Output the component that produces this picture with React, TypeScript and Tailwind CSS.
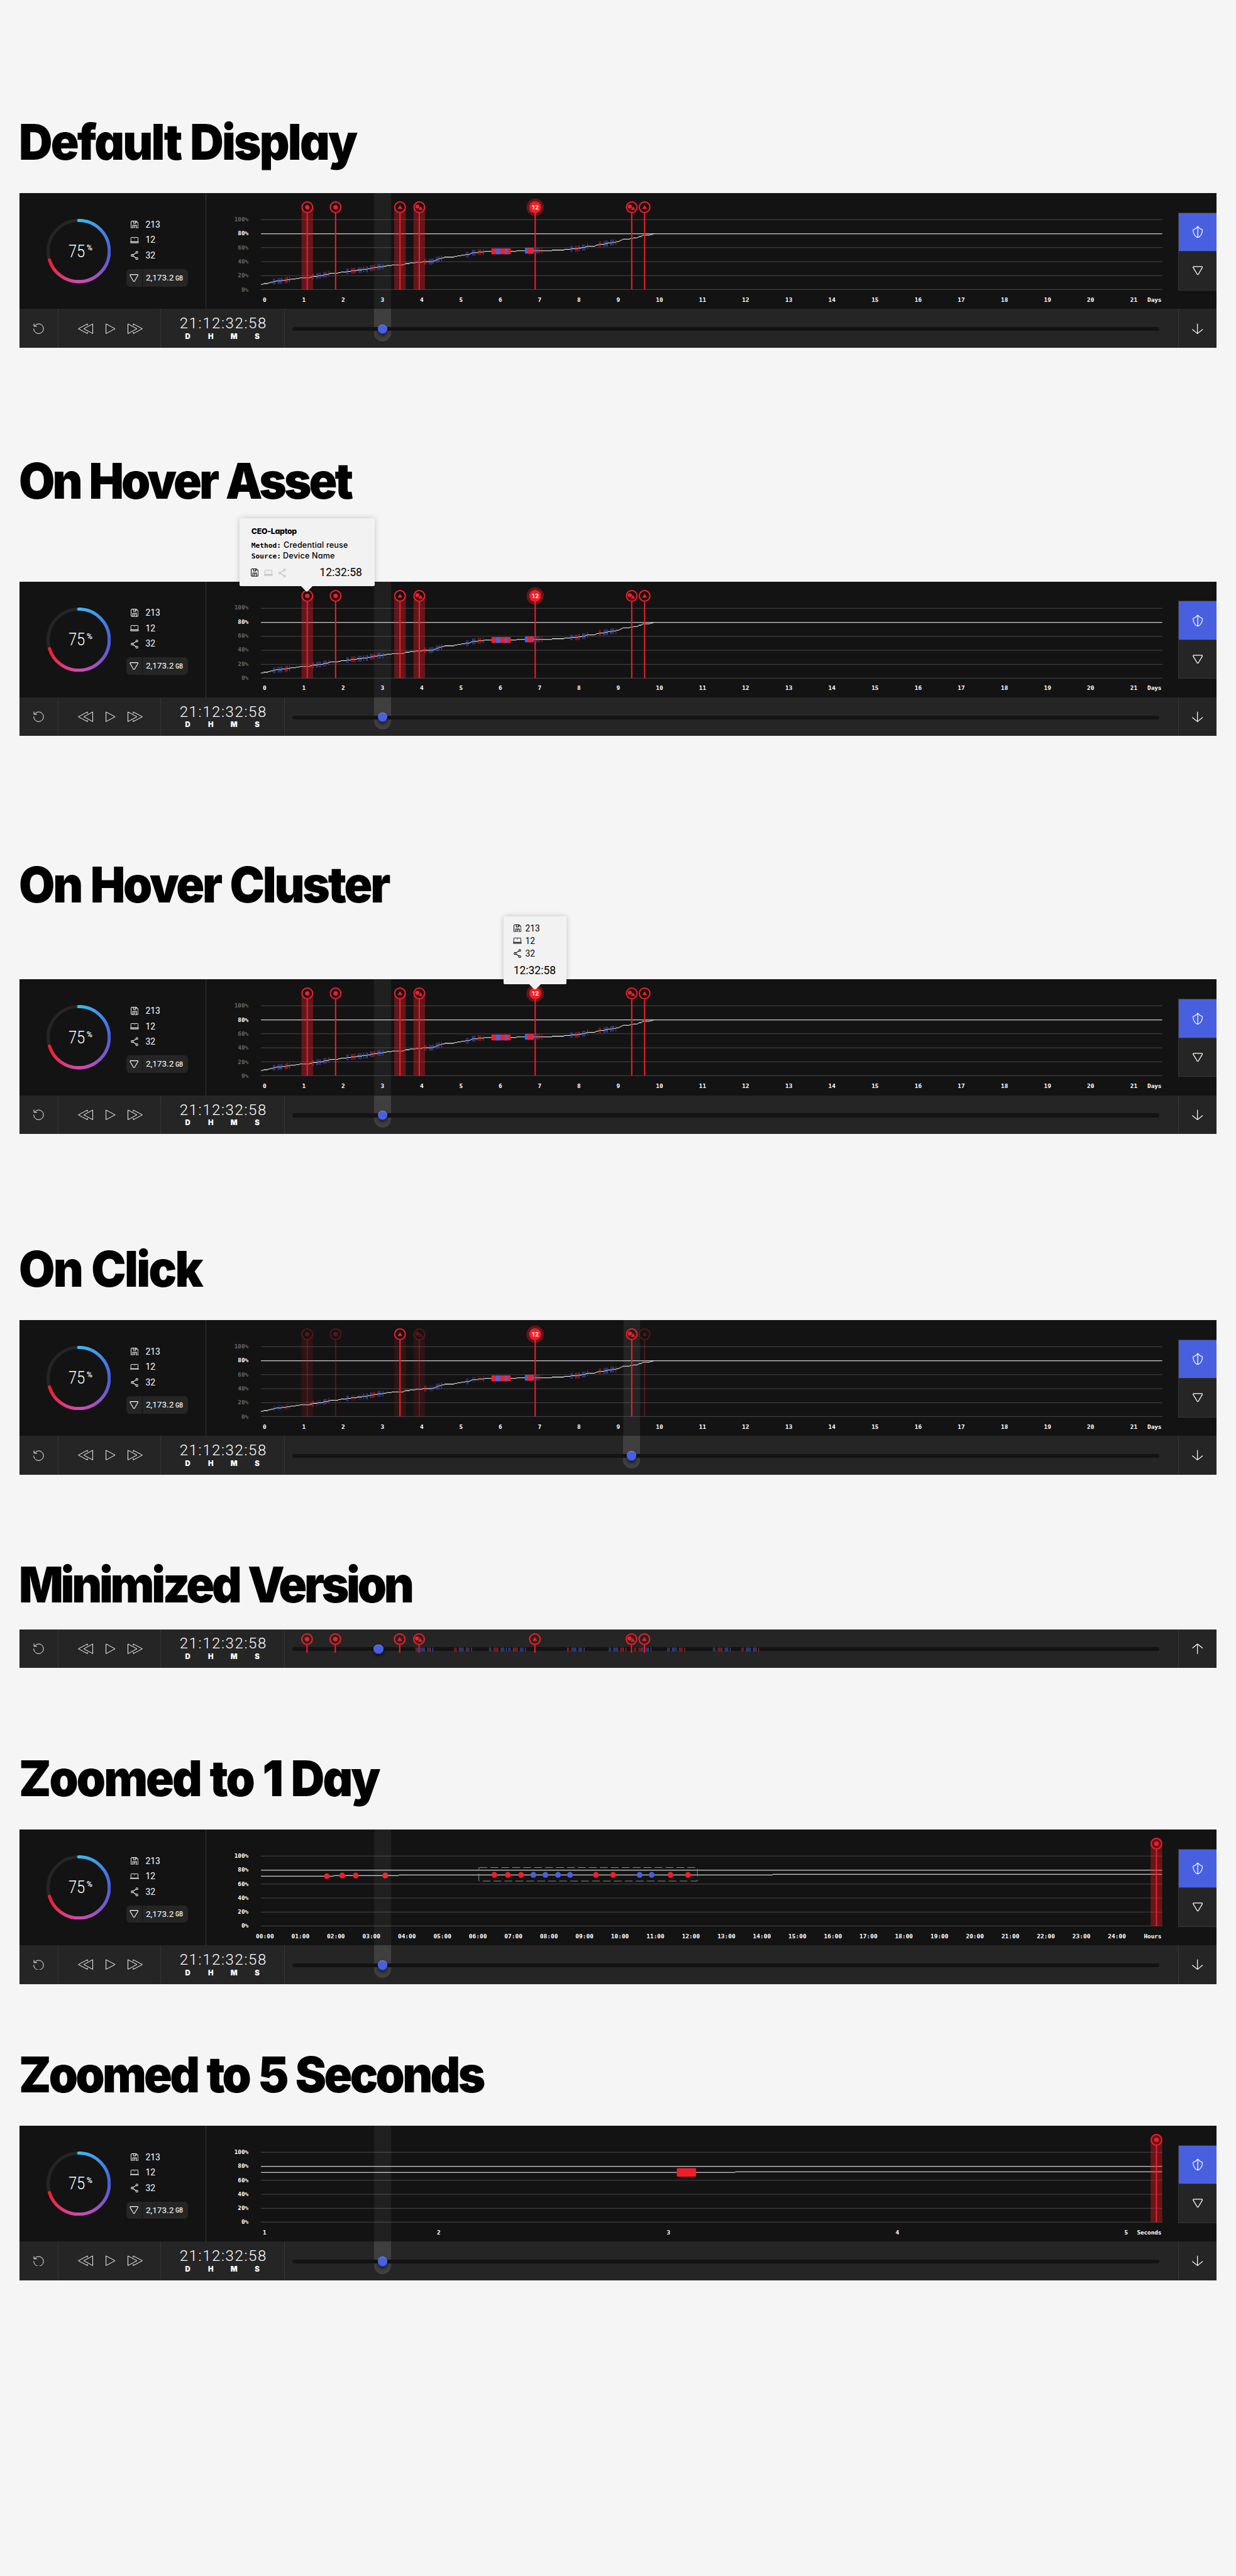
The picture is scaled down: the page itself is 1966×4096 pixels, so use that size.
import React from "react";

/* The root sets --spacing to one design unit (0.512px), so w-120 is 120 design units. */

const RED = "#f31d28";
const BLUE = "#4860e0";

type Glyph = "dot" | "triangle" | "both";
type MarkerData = { x: number; glyph: Glyph; band?: boolean; dim?: boolean };
type AxisLabel = { text: string; cls: string };

/* ---------- icons ---------- */

type IconProps = { className?: string };

const Floppy = ({ className = "" }: IconProps) => (
  <svg viewBox="0 0 24 25" className={`h-25 w-24 ${className}`} fill="none" stroke="currentColor" strokeWidth="2">
    <path d="M4 1h13l6 6v13.5a3.5 3.5 0 0 1-3.500 3.500H4.500A3.500 3.500 0 0 1 1 20.500V4a3 3 0 0 1 3-3z" />
    <path d="M8 1v6a1 1 0 0 0 1 1h6a1 1 0 0 0 1-1V1M13.500 3.500v2.500M6 24V14.500a1 1 0 0 1 1-1h10a1 1 0 0 1 1 1V24M9 17h6M9 20.300h4" />
  </svg>
);

const Laptop = ({ className = "" }: IconProps) => (
  <svg viewBox="0 0 27 19" className={`h-19 w-27 ${className}`} fill="none" stroke="currentColor" strokeWidth="1.700">
    <rect x="2.500" y="1" width="22" height="13.500" rx="1" />
    <rect x="1" y="14.300" width="25" height="3.700" rx="1" fill="currentColor" fillOpacity="0.250" />
    <circle cx="13.500" cy="4.200" r="1.200" fill="currentColor" stroke="none" />
  </svg>
);

const Share = ({ className = "" }: IconProps) => (
  <svg viewBox="0 0 24 28" className={`h-28 w-24 ${className}`} fill="none" stroke="currentColor" strokeWidth="2">
    <circle cx="4.300" cy="14" r="3" />
    <circle cx="19" cy="4.300" r="3" />
    <circle cx="19" cy="23.700" r="3" />
    <path d="M6.800 12.300 16.500 6M6.800 15.700 16.500 22" />
  </svg>
);

const Prism = ({ className = "" }: IconProps) => (
  <svg viewBox="0 0 32 28" className={className} fill="none" stroke="currentColor" strokeWidth="2.500" strokeLinejoin="round">
    <path d="M3.500 1.500h25a2 2 0 0 1 1.700 3L17.800 25.500a2 2 0 0 1-3.600 0L1.800 4.500a2 2 0 0 1 1.700-3z" />
  </svg>
);

const Shield = () => (
  <svg viewBox="0 0 32 38" className="h-38 w-32" fill="none" stroke="currentColor" strokeWidth="2.400" strokeLinejoin="round">
    <path d="M16 2c-3.500 4.500-8.500 8.500-14.500 10.300C1.500 25 8 34.500 16 36.500c8-2 14.500-11.500 14.500-24.200C24.500 10.500 19.500 6.500 16 2zM16 2v34.500" />
  </svg>
);

const Arrow = ({ up }: { up?: boolean }) => (
  <svg viewBox="0 0 34 34" className={up ? "h-34 w-34 rotate-180" : "h-34 w-34"} fill="none" stroke="currentColor" strokeWidth="2.400" strokeLinecap="round" strokeLinejoin="round">
    <path d="M17 2v30M1.500 19.500 17 32l15.500-12.500" />
  </svg>
);

const Reload = () => (
  <svg viewBox="0 0 33 33" className="h-33 w-33" fill="none" stroke="currentColor" strokeWidth="1.900">
    <path d="M1.500 16.500A15 15 0 1 0 4.500 8M2 1v8.300h9.500" />
  </svg>
);

const Rewind = ({ flip }: { flip?: boolean }) => (
  <svg viewBox="0 0 47 34" className={flip ? "h-34 w-47 -scale-x-100" : "h-34 w-47"} fill="none" stroke="currentColor" strokeWidth="1.900" strokeLinejoin="round">
    <path d="M46 2v30L18 17zM29.500 7V2L1.200 17l28.300 15v-5" />
  </svg>
);

const Play = () => (
  <svg viewBox="0 0 31 34" className="h-34 w-31" fill="none" stroke="currentColor" strokeWidth="1.900" strokeLinejoin="round">
    <path d="M1.200 2v30L29.500 17z" />
  </svg>
);

/* ---------- chart data ---------- */

const LINE_ENDS = [
  818, 832, 840, 848, 856, 874, 890, 902, 918, 930, 962, 970, 986, 1002, 1006, 1018, 1024, 1050, 1058, 1076, 1090, 1108,
  1124, 1142, 1150, 1160, 1172, 1190, 1200, 1216, 1252, 1258, 1272, 1290, 1312, 1344, 1350, 1354, 1360, 1364, 1372,
  1380, 1410, 1420, 1432, 1444, 1458, 1462, 1466, 1484, 1504, 1604, 1714, 1752, 1772, 1796, 1806, 1818, 1822, 1848,
  1852, 1860, 1878, 1888, 1900, 1914, 1922, 1926, 1930, 1934, 1956, 1966, 1980, 1984, 1992, 1996, 2018, 2026, 2030,
];

const LINE_PATH = LINE_ENDS.map((end, i) => `M${i ? LINE_ENDS[i - 1] : 810} ${283 - i * 2}H${end}`).join("");

const lineY = (x: number) => 283 - 2 * LINE_ENDS.findIndex((end) => x <= end + 0.5);

const TICKS_BLUE = [
  849, 853, 863, 867, 871, 875, 893, 899, 983, 987, 995, 1005, 1009, 1021, 1077, 1081, 1113, 1117, 1121, 1129, 1137,
  1141, 1151, 1173, 1177, 1181, 1189, 1333, 1337, 1341, 1345, 1355, 1359, 1363, 1371, 1449, 1453, 1467, 1471, 1475,
  1667, 1773, 1777, 1799, 1809, 1813, 1817, 1825, 1875, 1879, 1883, 1887, 1897, 1901, 1905,
];
const TICKS_RED = [
  885, 889, 969, 973, 991, 1013, 1091, 1095, 1099, 1103, 1155, 1159, 1163, 1319, 1323, 1485, 1489, 1493, 1501, 1671,
  1675, 1683, 1787, 1791, 1795, 1861, 1865, 1913,
];
const DIM_RANGES = [[0, 900], [980, 996], [1090, 1122], [1332, 1346], [1466, 1494], [1682, 1684]];
const isDim = (x: number) => DIM_RANGES.some(([a, b]) => x >= a && x <= b);

const MINI_BLUE = [
  1293, 1297, 1307, 1311, 1315, 1319, 1337, 1345, 1427, 1431, 1439, 1449, 1453, 1465, 1521, 1525, 1557, 1561, 1565,
  1573, 1581, 1585, 1595, 1617, 1621, 1625, 1633, 1777, 1781, 1785, 1789, 1799, 1803, 1807, 1815, 1893, 1897, 1907,
  1911, 1915, 1919, 1993, 1997, 2007, 2011, 2015, 2023, 2075, 2079, 2089, 2093, 2097, 2101, 2111, 2217, 2221, 2243,
  2253, 2257, 2261, 2269, 2319, 2323, 2327, 2331, 2341, 2345, 2349,
];
const MINI_RED = [
  1329, 1333, 1413, 1417, 1435, 1457, 1535, 1539, 1543, 1547, 1599, 1603, 1607, 1763, 1767, 1929, 1933, 1937, 1945,
  1971, 1975, 1985, 1989, 2115, 2119, 2127, 2231, 2235, 2239, 2305, 2309, 2357,
];

const GRID = [82.5, 126.5, 169.5, 213, 256.5, 299.5];

const MARKERS: MarkerData[] = [
  { x: 954, glyph: "dot", band: true },
  { x: 1042, glyph: "dot" },
  { x: 1242, glyph: "triangle", band: true },
  { x: 1302, glyph: "both", band: true },
  { x: 1962, glyph: "both" },
  { x: 2002, glyph: "triangle" },
];
const CLICK_MARKERS: MarkerData[] = MARKERS.map((m) => ({ ...m, dim: m.x !== 1242 && m.x !== 1962 }));
const MINI_MARKERS: MarkerData[] = [
  ...MARKERS.map((m) => ({ ...m, band: false })),
  { x: 1662, glyph: "triangle" as Glyph },
];

const DAY_AXIS: AxisLabel[] = Array.from({ length: 22 }, (_, i) => ({
  text: String(i),
  cls: i === 0 ? "w-[5.17px]" : i < 10 ? "w-[5.17px] ml-112" : "w-[11.26px] ml-112",
}));
const HOUR_AXIS: AxisLabel[] = Array.from({ length: 25 }, (_, i) => ({
  text: `${String(i).padStart(2, "0")}:00`,
  cls: i === 0 ? "w-56 -ml-22" : "w-56 ml-[27.8px]",
}));
const SECOND_AXIS: AxisLabel[] = [
  { text: "1", cls: "w-10" },
  { text: "2", cls: "w-10 ml-531" },
  { text: "3", cls: "w-10 ml-704" },
  { text: "4", cls: "w-10 ml-701" },
  { text: "5", cls: "w-10 ml-701" },
];

/* ---------- markers ---------- */

function Marker({ m, cy, bottom, fill }: { m: MarkerData; cy: number; bottom: number; fill: string }) {
  return (
    <g>
      <circle cx={m.x} cy={cy} r="16.5" fill={fill} />
      <g opacity={m.dim ? 0.3 : 1}>
        <circle cx={m.x} cy={cy} r="16.5" fill="none" stroke={RED} strokeWidth="4" />
        <path d={`M${m.x} ${cy + 18}V${bottom}`} stroke={RED} strokeWidth="4" />
        {m.glyph === "dot" && <circle cx={m.x} cy={cy} r="7" fill={RED} />}
        {m.glyph === "triangle" && <path d={`M${m.x} ${cy - 7}l7.5 12.500h-15z`} fill={RED} />}
        {m.glyph === "both" && (
          <>
            <circle cx={m.x - 6} cy={cy - 2} r="6.500" fill={RED} />
            <path d={`M${m.x + 4} ${cy - 4}l7.500 12.500h-15z`} fill={RED} stroke={fill === "none" ? "#131313" : fill} strokeWidth="0.700" />
          </>
        )}
      </g>
    </g>
  );
}

function Band({ x, opacity }: { x: number; opacity: number }) {
  return <rect x={x - 18} y="44" width="36" height="255.500" fill={RED} opacity={opacity} />;
}

function Gridlines() {
  return (
    <>
      {GRID.map((y, i) => (
        <path key={y} d={`M810 ${y}H3610`} stroke={i === 1 ? "#fff" : "#6c6c6c"} strokeWidth={i === 1 ? 2.2 : 1.2} />
      ))}
    </>
  );
}

function ChartFrame({ children }: { children: React.ReactNode }) {
  return (
    <svg viewBox="640 0 3020 360" className="absolute inset-0 h-360 w-3020" preserveAspectRatio="none">
      {children}
    </svg>
  );
}

function DaysChart({ cursor, clicked }: { cursor: number; clicked?: boolean }) {
  const markers = clicked ? CLICK_MARKERS : MARKERS;
  const tick = (x: number, color: string) => (
    <rect key={x} x={x - 0.8} y={lineY(x) - 9} width="1.600" height="18" fill={color} opacity={clicked && isDim(x) ? 0.45 : 1} />
  );
  return (
    <ChartFrame>
      <rect x={cursor - 26} y="0" width="52" height="360" fill="#fff" opacity={clicked ? 0.075 : 0.06} />
      <Gridlines />
      <path d={LINE_PATH} stroke="#fff" strokeWidth="2" />
      {TICKS_BLUE.map((x) => tick(x, BLUE))}
      {TICKS_RED.map((x) => tick(x, RED))}
      <rect x="1526" y="172" width="60" height="18" rx="2" fill={RED} />
      <rect x="1540" y="172" width="14" height="18" fill={BLUE} />
      <rect x="1568" y="172" width="7" height="18" fill={BLUE} />
      <rect x="1630" y="170" width="28" height="18" rx="2" fill={BLUE} />
      <rect x="1638" y="170" width="16" height="18" fill={RED} />
      {markers.filter((m) => m.band).map((m) => (
        <Band key={m.x} x={m.x} opacity={clicked ? 0.12 : 0.36} />
      ))}
      {markers.map((m) => (
        <Marker key={m.x} m={m} cy={44} bottom={299.5} fill={m.x === cursor ? "#212121" : "#131313"} />
      ))}
      <circle cx="1662" cy="44" r="27" fill={RED} opacity="0.360" />
      <circle cx="1662" cy="44" r="18.500" fill={RED} />
      <path d="M1662 60V299.500" stroke={RED} strokeWidth="4" />
      <text x="1662" y="51" textAnchor="middle" fill="#fff" fontFamily="Roboto, sans-serif" fontWeight="700" fontSize="19.500">
        12
      </text>
    </ChartFrame>
  );
}

function HoursChart() {
  const dots: [number, number, string][] = [
    [1014.6, 145, RED], [1062.4, 143, RED], [1104.5, 143, RED], [1196.3, 143, RED],
    [1535, 141, RED], [1577, 141, RED], [1618, 141, RED],
    [1656.5, 141, BLUE], [1694, 141, BLUE], [1733, 141, BLUE], [1770.3, 141, BLUE],
    [1850.7, 141, RED], [1904.2, 141, RED], [1986.5, 141, BLUE], [2023.8, 141, BLUE],
    [2082.2, 141, RED], [2136.7, 141, RED],
  ];
  return (
    <ChartFrame>
      <Gridlines />
      <path d="M810 145H1036M1036 143H1239M1239 141H2400M2400 139H3610" stroke="#fff" strokeWidth="2" />
      <rect x="1487" y="118" width="679" height="42" fill="none" stroke="#8a8a8a" strokeWidth="2" strokeDasharray="24 10" rx="2" />
      {dots.map(([x, y, c]) => (
        <circle key={x} cx={x} cy={y} r="9" fill={c} />
      ))}
      <rect x="1162" y="0" width="52" height="360" fill="#fff" opacity="0.060" />
      <Band x={3592} opacity={0.36} />
      <circle cx="3592" cy="44" r="16.500" fill="#611519" />
      <Marker m={{ x: 3592, glyph: "dot" }} cy={44} bottom={299.5} fill="none" />
    </ChartFrame>
  );
}

function SecondsChart() {
  return (
    <ChartFrame>
      <Gridlines />
      <path d="M810 145H2284M2284 143H3610" stroke="#fff" strokeWidth="2" />
      <rect x="2102" y="132" width="60" height="26" rx="3" fill={RED} />
      <rect x="1162" y="0" width="52" height="360" fill="#fff" opacity="0.060" />
      <Band x={3592} opacity={0.36} />
      <circle cx="3592" cy="44" r="16.500" fill="#611519" />
      <Marker m={{ x: 3592, glyph: "dot" }} cy={44} bottom={299.5} fill="none" />
    </ChartFrame>
  );
}

/* ---------- panel parts ---------- */

function Gauge() {
  return (
    <div className="relative h-200 w-200 shrink-0">
      <svg viewBox="0 0 200 200" className="absolute inset-0 h-200 w-200" fill="none" strokeWidth="10" strokeLinecap="round">
        <defs>
          <linearGradient id="arcA" gradientUnits="userSpaceOnUse" x1="100" y1="5" x2="195" y2="100">
            <stop offset="0" stopColor="#3eb8f2" />
            <stop offset="1" stopColor="#4760e0" />
          </linearGradient>
          <linearGradient id="arcB" gradientUnits="userSpaceOnUse" x1="195" y1="100" x2="100" y2="195">
            <stop offset="0" stopColor="#4760e0" />
            <stop offset="1" stopColor="#d04bb0" />
          </linearGradient>
          <linearGradient id="arcC" gradientUnits="userSpaceOnUse" x1="100" y1="195" x2="9" y2="128">
            <stop offset="0" stopColor="#d04bb0" />
            <stop offset="1" stopColor="#f31d28" />
          </linearGradient>
        </defs>
        <circle cx="100" cy="100" r="95" stroke="#252525" />
        <path d="M100 195A95 95 0 0 1 9.150 127.800" stroke="url(#arcC)" />
        <path d="M195 100A95 95 0 0 1 100 195" stroke="url(#arcB)" />
        <path d="M100 5A95 95 0 0 1 195 100" stroke="url(#arcA)" />
      </svg>
      <div className="relative flex h-200 items-center pl-68">
        <span className="w-52 origin-left scale-x-[0.86] font-[Roboto] text-[27.5px] leading-none font-light">75</span>
        <span className="mb-18 ml-5 origin-left font-[Roboto] text-[12.6px] leading-none font-medium">%</span>
      </div>
    </div>
  );
}

function Stat({ icon, value }: { icon: React.ReactNode; value: string }) {
  return (
    <div className="flex h-48 items-center gap-20 pl-12">
      <div className="flex w-28 justify-center pb-3">{icon}</div>
      <span className="font-[Roboto] text-[13.9px] leading-none">{value}</span>
    </div>
  );
}

function Summary() {
  return (
    <div className="flex w-578 shrink-0 gap-48 pt-80 pl-84">
      <Gauge />
      <div className="-mt-5 flex w-192 flex-col">
        <Stat icon={<Floppy />} value="213" />
        <Stat icon={<Laptop />} value="12" />
        <Stat icon={<Share />} value="32" />
        <div className="mt-17 flex h-54 overflow-hidden rounded-[6px] bg-[#252525]">
          <div className="flex w-51 items-center justify-center border-r border-[#131313]">
            <Prism className="h-24 w-28" />
          </div>
          <div className="flex items-center gap-5 pl-10 font-[Roboto] leading-none whitespace-nowrap">
            <span className="text-[13.6px]">2,173.2</span>
            <span className="w-24 origin-left scale-x-[0.88] pt-4 text-[10.4px] font-medium">GB</span>
          </div>
        </div>
      </div>
    </div>
  );
}

function YAxis({ bright }: { bright?: boolean }) {
  return (
    <div className="flex h-238 flex-col items-end justify-between">
      {["100%", "80%", "60%", "40%", "20%", "0%"].map((t) => (
        <span
          key={t}
          className={
            bright || t === "80%"
              ? "h-20 font-['DejaVu_Sans_Mono'] text-[9.4px] leading-20 font-bold text-white"
              : "h-20 font-['DejaVu_Sans_Mono'] text-[9.4px] leading-20 font-bold text-[#666]"
          }
        >
          {t}
        </span>
      ))}
    </div>
  );
}

function XAxis({ labels, unit }: { labels: AxisLabel[]; unit: string }) {
  return (
    <div className="relative flex justify-between pt-12 pr-50 pl-177 font-['DejaVu_Sans_Mono'] text-[9.5px] leading-20 font-bold">
      <div className="flex">
        {labels.map((l) => (
          <span key={l.text} className={`flex shrink-0 justify-center whitespace-nowrap ${l.cls}`}>
            {l.text}
          </span>
        ))}
      </div>
      <span className="absolute top-12 right-52 tracking-[-0.02em]">{unit}</span>
    </div>
  );
}

function SideTabs() {
  return (
    <div className="mt-60 flex h-242 w-120 shrink-0 flex-col border-y border-l border-[#363636]">
      <div className="flex flex-1 items-center justify-center border-b border-[#363636] bg-[#4860e0]">
        <Shield />
      </div>
      <div className="flex flex-1 items-center justify-center bg-[#252525]">
        <Prism className="h-28 w-32" />
      </div>
    </div>
  );
}

function Knob() {
  return (
    <div className="absolute top-47 h-30 w-30 rounded-full bg-[#4860e0] shadow-[0_3px_5px_rgba(0,0,0,0.6),inset_0_1px_0.500px_#7388f2,inset_0_-1px_0.500px_#1733c6]" />
  );
}

function ControlBar({ cursor, mini }: { cursor: string; mini?: boolean }) {
  return (
    <div className="flex h-120 bg-[#252525] text-white">
      <div className="flex w-121 shrink-0 items-center justify-center border-r border-[#363636]">
        <Reload />
      </div>
      <div className="flex w-320 shrink-0 items-center gap-38 border-r border-[#363636] pl-62">
        <Rewind />
        <Play />
        <Rewind flip />
      </div>
      <div className="flex w-384 shrink-0 flex-col items-center border-r border-[#363636] pt-23">
        <span className="pl-4 font-[Roboto] text-[24px] leading-46 font-light tracking-[1.6px]">21:12:32:58</span>
        <div className="mt-6 flex gap-52 pr-2 font-[Inter] text-[11.4px] leading-22 font-black">
          {["D", "H", "M", "S"].map((c) => (
            <span key={c} className="flex w-20 justify-center">
              {c}
            </span>
          ))}
        </div>
      </div>
      <div className="relative flex flex-1 items-center pl-23">
        {!mini && <div className={`absolute top-0 h-100 w-52 rounded-b-full bg-white/12 ${cursor}`} />}
        <div className="relative mt-4 h-12 w-2694 rounded-full bg-[#131313]" />
        {mini && (
          <svg viewBox="885 0 2775 120" className="absolute inset-0 h-120 w-2775" preserveAspectRatio="none">
            {MINI_BLUE.map((x) => (
              <rect key={x} x={x - 0.9} y="56" width="1.800" height="12" fill={BLUE} />
            ))}
            {MINI_RED.map((x) => (
              <rect key={x} x={x - 0.9} y="56" width="1.800" height="12" fill={RED} />
            ))}
            {MINI_MARKERS.map((m) => (
              <Marker key={m.x} m={m} cy={30} bottom={72} fill="#252525" />
            ))}
          </svg>
        )}
        <div className={`absolute top-0 flex w-52 justify-center ${cursor}`}>
          <Knob />
        </div>
      </div>
      <div className="flex w-120 shrink-0 items-center justify-center border-l border-[#363636]">
        <Arrow up={mini} />
      </div>
    </div>
  );
}

type PanelProps = {
  chart: React.ReactNode;
  labels: AxisLabel[];
  unit: string;
  cursor?: string;
  bright?: boolean;
  children?: React.ReactNode;
};

function Panel({ chart, labels, unit, cursor = "left-277", bright, children }: PanelProps) {
  return (
    <div className="relative mx-60 h-480 text-white">
      <div className="flex h-360 bg-[#131313]">
        <Summary />
        <div className="relative flex-1 border-l border-[#363636]">
          {chart}
          <div className="relative w-132 pt-72">
            <YAxis bright={bright} />
          </div>
          <XAxis labels={labels} unit={unit} />
        </div>
        <SideTabs />
      </div>
      <ControlBar cursor={cursor} />
      {children}
    </div>
  );
}

function Pointer() {
  return (
    <svg viewBox="0 0 36 17" className="absolute top-full left-1/2 h-17 w-36 -translate-x-1/2">
      <path d="M0 0H36L20.500 15.500a3.500 3.500 0 0 1-5 0z" fill="#f2f2f2" />
    </svg>
  );
}

function AssetTooltip() {
  return (
    <div className="absolute -top-196 left-684 flex h-210 w-420 flex-col rounded-[2px] bg-[#f2f2f2] pt-27 pl-37 leading-none text-black shadow-[0_0_10px_rgba(0,0,0,0.2)]">
      <span className="font-[Inter] text-[12.4px] leading-28 font-extrabold tracking-[-0.025em] [font-feature-settings:'cv11']">CEO-Laptop</span>
      <div className="mt-12 flex h-34 items-center">
        <span className="w-100 font-['DejaVu_Sans_Mono'] text-[11.2px] font-bold">Method:</span>
        <span className="font-[Inter] text-[12.6px] font-medium tracking-[0.015em] [font-feature-settings:'cv11']">Credential reuse</span>
      </div>
      <div className="flex h-34 items-center">
        <span className="w-98 font-['DejaVu_Sans_Mono'] text-[11.2px] font-bold">Source:</span>
        <span className="font-[Inter] text-[12.6px] font-medium tracking-[0.015em] [font-feature-settings:'cv11']">Device Name</span>
      </div>
      <div className="mt-14 flex h-40 items-center">
        <Floppy className="-ml-2" />
        <Laptop className="ml-17 text-[#bbb]" />
        <Share className="ml-18 text-[#bbb]" />
        <span className="ml-104 font-[Roboto] text-[17.5px]">12:32:58</span>
      </div>
      <Pointer />
    </div>
  );
}

function ClusterTooltip() {
  const rows: [React.ReactNode, string][] = [
    [<Floppy />, "213"],
    [<Laptop />, "12"],
    [<Share />, "32"],
  ];
  return (
    <div className="absolute -top-196 left-1504 flex h-210 w-196 flex-col rounded-[2px] bg-[#f2f2f2] pt-19 pl-29 leading-none text-black shadow-[0_0_10px_rgba(0,0,0,0.2)]">
      {rows.map(([icon, value]) => (
        <div key={value} className="flex h-39 items-center gap-11">
          <div className="flex w-28 justify-center pb-3">{icon}</div>
          <span className="font-[Roboto] text-[13.8px]">{value}</span>
        </div>
      ))}
      <span className="mt-16 ml-2 font-[Roboto] text-[17.5px] leading-34">12:32:58</span>
      <Pointer />
    </div>
  );
}

function Title({ text, className }: { text: string; className: string }) {
  return (
    <h1 className={`ml-58 h-154 w-fit origin-left scale-x-[0.94] pt-3 font-[Inter] text-[78.8px] leading-154 font-black whitespace-nowrap text-black [font-feature-settings:'cv11'] [word-spacing:0.04em] ${className}`}>
      {text}
    </h1>
  );
}

export default function App() {
  return (
    <main className="h-[4096px] w-full overflow-hidden bg-[#f5f5f5] pt-363 [--spacing:0.512px]">
      <Title text="Default Display" className="mb-83 tracking-[-0.038em]" />
      <Panel chart={<DaysChart cursor={1188} />} labels={DAY_AXIS} unit="Days" />

      <Title text="On Hover Asset" className="mt-335 mb-237 tracking-[-0.053em]" />
      <Panel chart={<DaysChart cursor={1188} />} labels={DAY_AXIS} unit="Days">
        <AssetTooltip />
      </Panel>

      <Title text="On Hover Cluster" className="mt-383 mb-219 tracking-[-0.043em]" />
      <Panel chart={<DaysChart cursor={1188} />} labels={DAY_AXIS} unit="Days">
        <ClusterTooltip />
      </Panel>

      <Title text="On Click" className="mt-341 mb-83 tracking-[-0.036em]" />
      <Panel chart={<DaysChart cursor={1962} clicked />} labels={DAY_AXIS} unit="Days" cursor="left-1051" />

      <Title text="Minimized Version" className="mt-263 mb-63 tracking-[-0.058em]" />
      <div className="mx-60">
        <ControlBar cursor="left-265" mini />
      </div>

      <Title text="Zoomed to 1 Day" className="mt-265 mb-83 tracking-[-0.04em]" />
      <Panel chart={<HoursChart />} labels={HOUR_AXIS} unit="Hours" bright />

      <Title text="Zoomed to 5 Seconds" className="mt-203 mb-83 tracking-[-0.05em]" />
      <Panel chart={<SecondsChart />} labels={SECOND_AXIS} unit="Seconds" bright />
    </main>
  );
}
